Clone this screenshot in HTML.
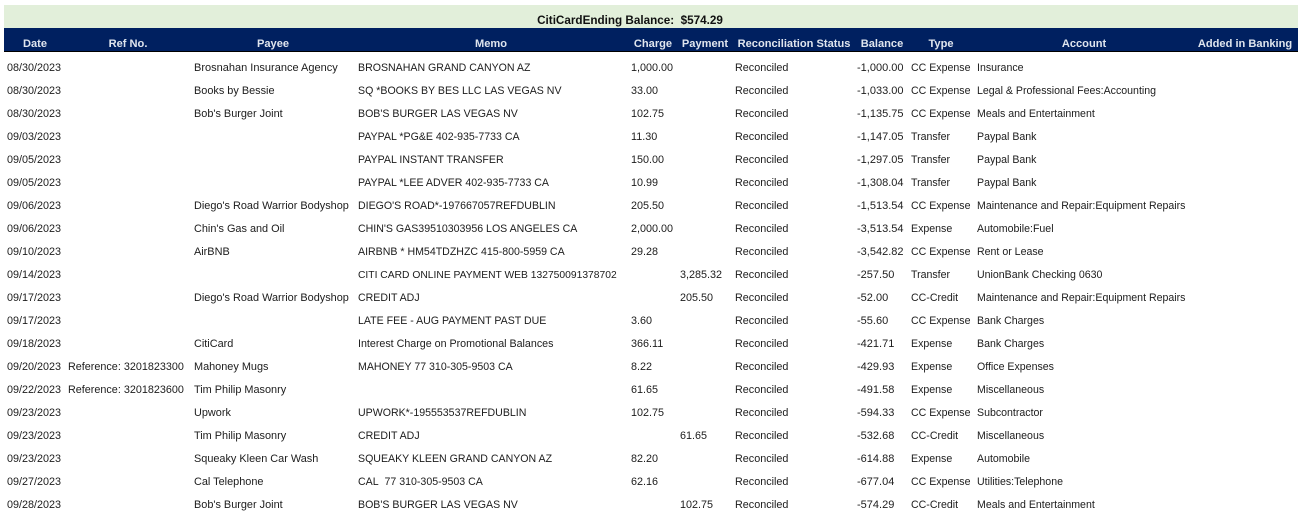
<!DOCTYPE html>
<html><head><meta charset="utf-8"><style>
html,body{margin:0;padding:0;background:#fff;width:1302px;height:524px;overflow:hidden}
body{position:relative;font-family:"Liberation Sans",Arial,sans-serif;color:#1c1c1c}
.g{position:absolute;left:4px;top:5px;width:1252px;padding-right:42px;height:23px;background:#e2efda;text-align:center;font:bold 11.7px/31px "Liberation Sans",sans-serif;color:#111}
.n{position:absolute;left:4px;top:28px;width:1294px;height:23px;background:#002060;border-bottom:1px solid #000}
.n span{position:absolute;top:0;transform:translateX(-50%);font:bold 11.1px/33px "Liberation Sans",sans-serif;color:#dfe5ee;white-space:nowrap}
table{position:absolute;left:7px;top:57px;border-collapse:collapse;table-layout:fixed;width:1230px}
td{padding:0;height:23px;line-height:23px;font-size:10.6px;white-space:nowrap;overflow:visible}
td:nth-child(1),td:nth-child(2),td:nth-child(5),td:nth-child(6),td:nth-child(7){font-size:10.8px}
td:nth-child(3){font-size:10.9px}
td:nth-child(4){font-size:10.6px}
td:nth-child(8){font-size:11px}
</style></head><body>
<div class="g">CitiCardEnding Balance:&nbsp; $574.29</div>
<div class="n"><span style="left:31px">Date</span><span style="left:124px">Ref No.</span><span style="left:269px">Payee</span><span style="left:487px">Memo</span><span style="left:649px">Charge</span><span style="left:701px">Payment</span><span style="left:790px">Reconciliation Status</span><span style="left:878px">Balance</span><span style="left:937px">Type</span><span style="left:1080px">Account</span><span style="left:1241px">Added in Banking</span></div>
<table><colgroup><col style="width:61px"><col style="width:126px"><col style="width:164px"><col style="width:273px"><col style="width:49px"><col style="width:55px"><col style="width:122px"><col style="width:54px"><col style="width:66px"><col style="width:260px"></colgroup>
<tr><td>08/30/2023</td><td></td><td style="font-size:11px">Brosnahan Insurance Agency</td><td>BROSNAHAN GRAND CANYON AZ</td><td>1,000.00</td><td></td><td>Reconciled</td><td>-1,000.00</td><td>CC Expense</td><td>Insurance</td></tr>
<tr><td>08/30/2023</td><td></td><td>Books by Bessie</td><td>SQ *BOOKS BY BES LLC LAS VEGAS NV</td><td>33.00</td><td></td><td>Reconciled</td><td>-1,033.00</td><td>CC Expense</td><td>Legal &amp; Professional Fees:Accounting</td></tr>
<tr><td>08/30/2023</td><td></td><td>Bob's Burger Joint</td><td>BOB'S BURGER LAS VEGAS NV</td><td>102.75</td><td></td><td>Reconciled</td><td>-1,135.75</td><td>CC Expense</td><td>Meals and Entertainment</td></tr>
<tr><td>09/03/2023</td><td></td><td></td><td>PAYPAL *PG&amp;E 402-935-7733 CA</td><td>11.30</td><td></td><td>Reconciled</td><td>-1,147.05</td><td>Transfer</td><td>Paypal Bank</td></tr>
<tr><td>09/05/2023</td><td></td><td></td><td>PAYPAL INSTANT TRANSFER</td><td>150.00</td><td></td><td>Reconciled</td><td>-1,297.05</td><td>Transfer</td><td>Paypal Bank</td></tr>
<tr><td>09/05/2023</td><td></td><td></td><td>PAYPAL *LEE ADVER 402-935-7733 CA</td><td>10.99</td><td></td><td>Reconciled</td><td>-1,308.04</td><td>Transfer</td><td>Paypal Bank</td></tr>
<tr><td>09/06/2023</td><td></td><td>Diego's Road Warrior Bodyshop</td><td>DIEGO'S ROAD*-197667057REFDUBLIN</td><td>205.50</td><td></td><td>Reconciled</td><td>-1,513.54</td><td>CC Expense</td><td>Maintenance and Repair:Equipment Repairs</td></tr>
<tr><td>09/06/2023</td><td></td><td>Chin's Gas and Oil</td><td>CHIN'S GAS39510303956 LOS ANGELES CA</td><td>2,000.00</td><td></td><td>Reconciled</td><td>-3,513.54</td><td>Expense</td><td>Automobile:Fuel</td></tr>
<tr><td>09/10/2023</td><td></td><td>AirBNB</td><td>AIRBNB * HM54TDZHZC 415-800-5959 CA</td><td>29.28</td><td></td><td>Reconciled</td><td>-3,542.82</td><td>CC Expense</td><td>Rent or Lease</td></tr>
<tr><td>09/14/2023</td><td></td><td></td><td style="font-size:10.3px">CITI CARD ONLINE PAYMENT WEB 132750091378702</td><td></td><td>3,285.32</td><td>Reconciled</td><td>-257.50</td><td>Transfer</td><td>UnionBank Checking 0630</td></tr>
<tr><td>09/17/2023</td><td></td><td>Diego's Road Warrior Bodyshop</td><td>CREDIT ADJ</td><td></td><td>205.50</td><td>Reconciled</td><td>-52.00</td><td>CC-Credit</td><td>Maintenance and Repair:Equipment Repairs</td></tr>
<tr><td>09/17/2023</td><td></td><td></td><td>LATE FEE - AUG PAYMENT PAST DUE</td><td>3.60</td><td></td><td>Reconciled</td><td>-55.60</td><td>CC Expense</td><td>Bank Charges</td></tr>
<tr><td>09/18/2023</td><td></td><td>CitiCard</td><td style="font-size:10.7px">Interest Charge on Promotional Balances</td><td>366.11</td><td></td><td>Reconciled</td><td>-421.71</td><td>Expense</td><td>Bank Charges</td></tr>
<tr><td>09/20/2023</td><td>Reference: 3201823300</td><td>Mahoney Mugs</td><td>MAHONEY 77 310-305-9503 CA</td><td>8.22</td><td></td><td>Reconciled</td><td>-429.93</td><td>Expense</td><td>Office Expenses</td></tr>
<tr><td>09/22/2023</td><td>Reference: 3201823600</td><td>Tim Philip Masonry</td><td></td><td>61.65</td><td></td><td>Reconciled</td><td>-491.58</td><td>Expense</td><td>Miscellaneous</td></tr>
<tr><td>09/23/2023</td><td></td><td>Upwork</td><td>UPWORK*-195553537REFDUBLIN</td><td>102.75</td><td></td><td>Reconciled</td><td>-594.33</td><td>CC Expense</td><td>Subcontractor</td></tr>
<tr><td>09/23/2023</td><td></td><td>Tim Philip Masonry</td><td>CREDIT ADJ</td><td></td><td>61.65</td><td>Reconciled</td><td>-532.68</td><td>CC-Credit</td><td>Miscellaneous</td></tr>
<tr><td>09/23/2023</td><td></td><td>Squeaky Kleen Car Wash</td><td>SQUEAKY KLEEN GRAND CANYON AZ</td><td>82.20</td><td></td><td>Reconciled</td><td>-614.88</td><td>Expense</td><td>Automobile</td></tr>
<tr><td>09/27/2023</td><td></td><td>Cal Telephone</td><td>CAL&nbsp; 77 310-305-9503 CA</td><td>62.16</td><td></td><td>Reconciled</td><td>-677.04</td><td>CC Expense</td><td>Utilities:Telephone</td></tr>
<tr><td>09/28/2023</td><td></td><td>Bob's Burger Joint</td><td>BOB'S BURGER LAS VEGAS NV</td><td></td><td>102.75</td><td>Reconciled</td><td>-574.29</td><td>CC-Credit</td><td>Meals and Entertainment</td></tr>
</table>
</body></html>
